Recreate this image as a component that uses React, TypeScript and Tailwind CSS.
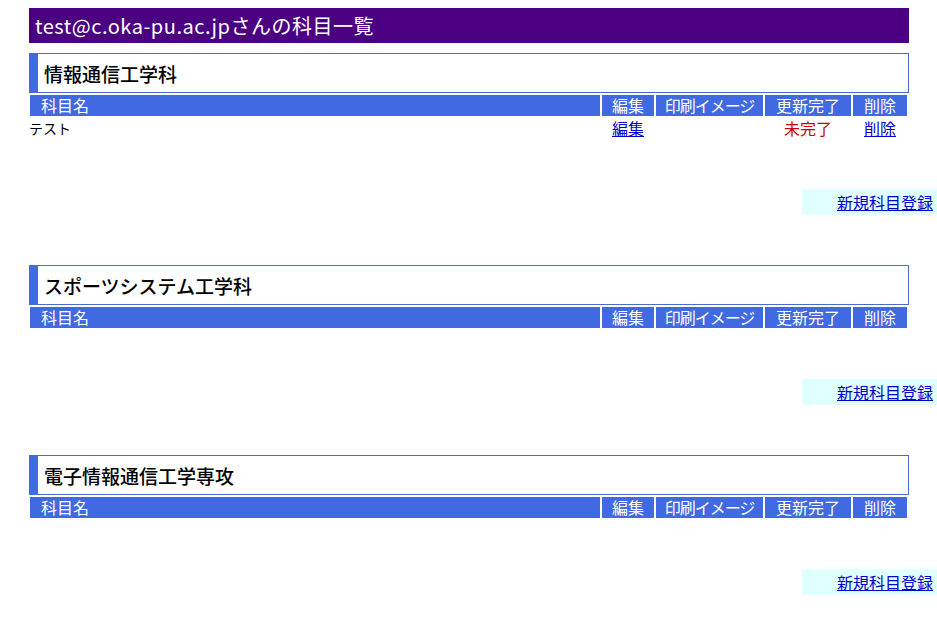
import React from 'react';

type Subject = {
  name: string;
  done: boolean;
};

type Department = {
  title: string;
  subjects: Subject[];
};

const departments: Department[] = [
  { title: '情報通信工学科', subjects: [{ name: 'テスト', done: false }] },
  { title: 'スポーツシステム工学科', subjects: [] },
  { title: '電子情報通信工学専攻', subjects: [] }
];

const cols = 'grid grid-cols-[1fr_52px_107px_86px_54px] gap-x-[2px]';

function DepartmentBlock({ dept }: { dept: Department }) {
  return (
    <div className="mt-[10px]">
      <div className="w-[880px]">
        {/* Department title box */}
        <div className="h-[40px] border border-[#4a6ad0] border-l-[9px] border-l-[#4169e1] flex items-center pl-[6px]">
          <h2 className="text-[19px] font-medium text-black leading-none">{dept.title}</h2>
        </div>

        {/* Subject table */}
        <div className="ml-[1px] w-[877px] mt-[2px]">
          <div className={`${cols} h-[21px] text-[16px] text-white leading-[21px]`}>
            <div className="bg-[#4169e1] pl-[11px]">科目名</div>
            <div className="bg-[#4169e1] text-center">編集</div>
            <div className="bg-[#4169e1] text-center tracking-[-1px]">印刷イメージ</div>
            <div className="bg-[#4169e1] text-center">更新完了</div>
            <div className="bg-[#4169e1] text-center">削除</div>
          </div>
          {dept.subjects.map((s) => (
            <div key={s.name} className={`${cols} h-[22px] items-center`}>
              <div className="text-[14px] text-black -ml-[1px]">{s.name}</div>
              <div className="text-center">
                <a href="#" className="text-[16px] text-[#0000cc] underline">編集</a>
              </div>
              <div />
              <div className="text-center text-[16px] text-[#cc0000]">{s.done ? '完了' : '未完了'}</div>
              <div className="text-center">
                <a href="#" className="text-[16px] text-[#0000cc] underline">削除</a>
              </div>
            </div>
          ))}
        </div>
      </div>

      {/* New subject link */}
      <div className="flex justify-end mt-[51px]">
        <div className="w-[135px] h-[26px] bg-[#e0ffff] flex items-center justify-end pr-[4px]">
          <a href="#" className="text-[16px] text-[#0000cc] underline leading-none">新規科目登録</a>
        </div>
      </div>
      <div className="h-[40px]" />
    </div>
  );
}

export default function App() {
  return (
    <div
      className="min-h-screen w-full bg-white pt-[8px] pl-[29px]"
      style={{ fontFamily: '"Noto Sans CJK JP", "Noto Sans", sans-serif' }}
    >
      <h1 className="w-[880px] h-[35px] bg-[#4b0082] text-white text-[20px] font-normal flex items-center pl-[6px] tracking-[0.5px]">
        test@c.oka-pu.ac.jpさんの科目一覧
      </h1>
      {departments.map((d) => (
        <DepartmentBlock key={d.title} dept={d} />
      ))}
    </div>
  );
}
